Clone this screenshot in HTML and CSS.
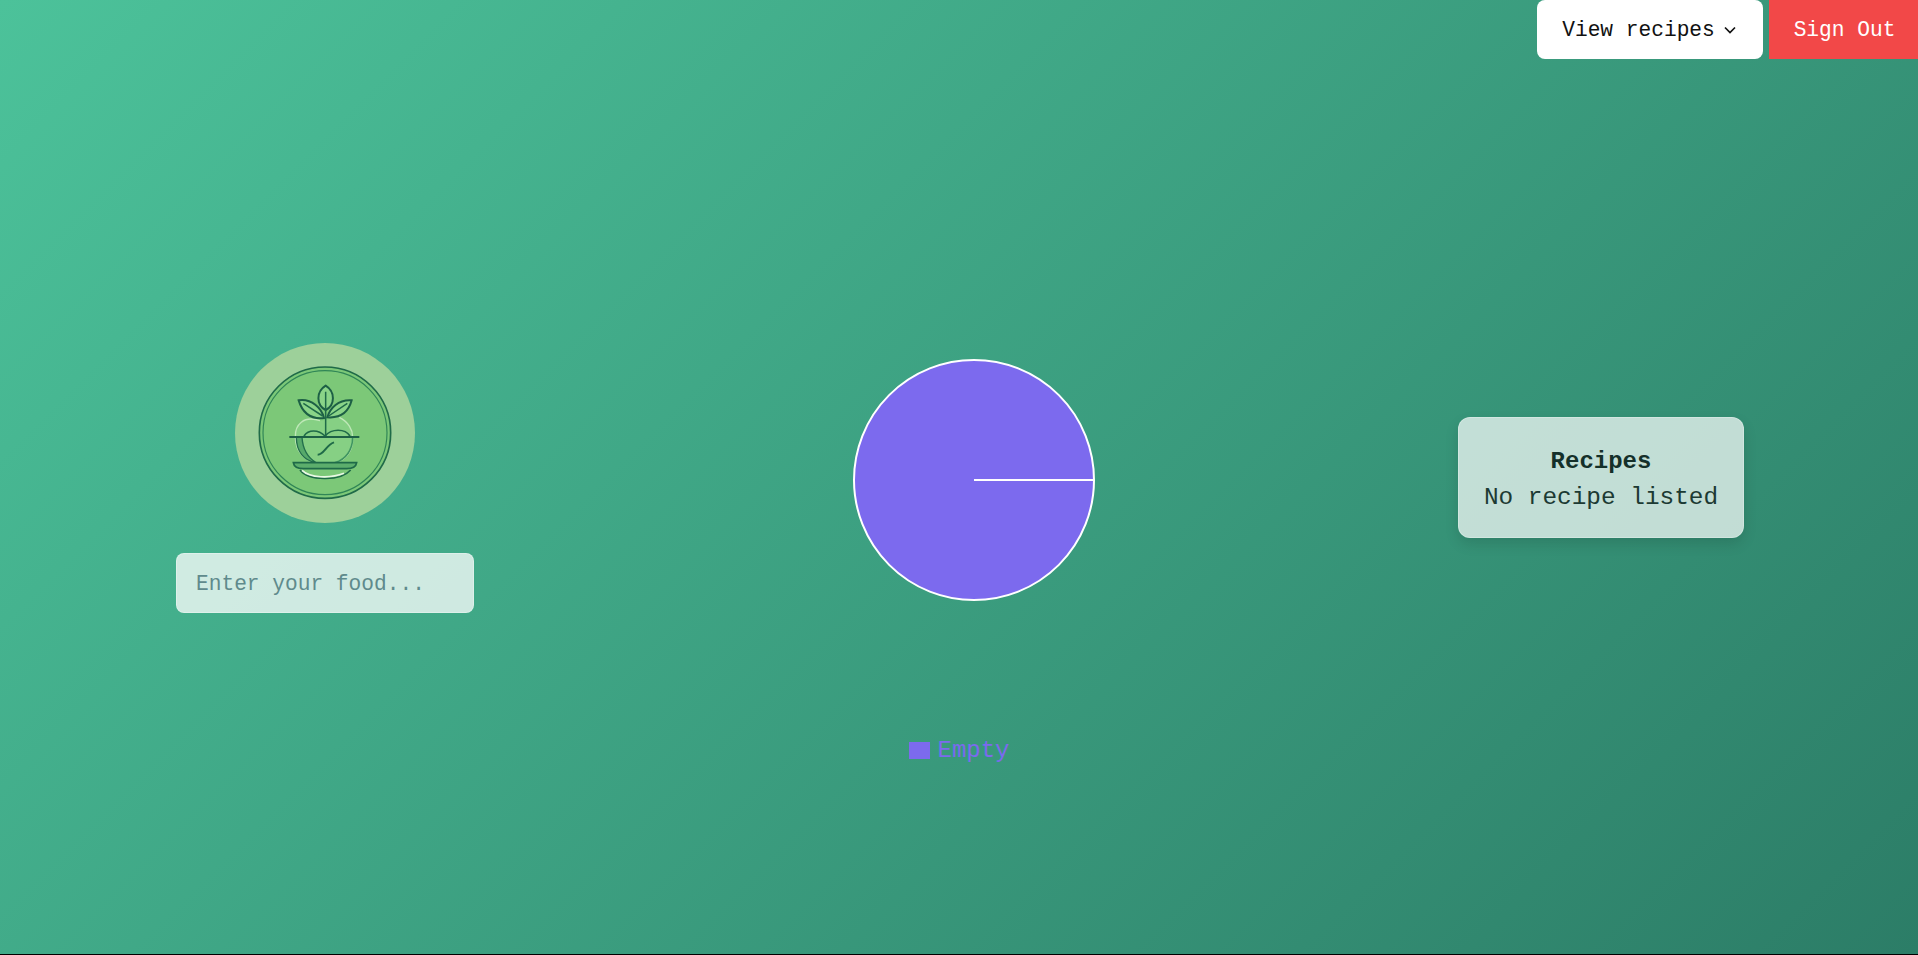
FILE: index.html
```html
<!DOCTYPE html>
<html lang="en">
<head>
    <meta charset="UTF-8">
    <meta name="viewport" content="width=device-width, initial-scale=1.0">
    <title>Food tracker</title>
    <link rel="stylesheet" href="styles.css">
</head>
<body>

    <nav class="topNav">
        <button type="button" class="recipesBtn">
            View recipes
            <svg class="chevron" viewBox="0 0 12 8" width="12" height="8"><path d="M1 1.5 6 6.5l5-5" fill="none" stroke="#111" stroke-width="1.7"/></svg>
        </button>
        <button type="button" class="signOutBtn">Sign Out</button>
    </nav>

    <main class="dashboard">
        <section class="foodColumn">
            <svg class="logo" viewBox="45 39 540 540" width="180" height="180" fill="none">
                <circle cx="315" cy="309" r="270" fill="#9dd09a"/>
                <circle cx="315" cy="308" r="197" fill="#7cc878" stroke="#1f6a48" stroke-width="5"/>
                <circle cx="315" cy="308" r="186" stroke="#2f8556" stroke-width="3.5"/>
                <!-- apple -->
                <path d="M300 272C250 255 225 285 226 320C226 365 255 395 290 398H345C380 390 400 360 398 320C398 300 385 275 358 262" fill="#86d084" stroke="#bfe8b8" stroke-width="4"/>
                <path d="M229 322C229 365 252 392 288 398C262 382 248 355 246 322Z" fill="#56a96a" stroke="#236f4c" stroke-width="4"/>
                <path d="M398 322C398 360 378 388 345 398" stroke="#3f9560" stroke-width="5"/>
                <path d="M252 318C265 298 295 298 315 318C335 295 375 295 390 318" stroke="#1f6a48" stroke-width="5"/>
                <path d="M208 321H418" stroke="#1d5f45" stroke-width="6"/>
                <path d="M293 374C312 374 318 345 342 337" stroke="#1f6a48" stroke-width="6"/>
                <!-- leaves -->
                <path d="M317 167C288 185 288 225 317 240C346 225 346 185 317 167Z" fill="#8ad488" stroke="#1d5f45" stroke-width="6"/>
                <path d="M236 211C275 205 305 235 312 264C275 268 248 250 236 211Z" fill="#8ad488" stroke="#1d5f45" stroke-width="6"/>
                <path d="M395 211C355 208 330 235 322 262C360 265 385 248 395 211Z" fill="#8ad488" stroke="#1d5f45" stroke-width="6"/>
                <path d="M317 185V318M250 220 308 258M382 220 326 258" stroke="#1f6a48" stroke-width="4.5"/>
                <!-- plate -->
                <path d="M220 398H410C408 412 395 416 380 416H250C235 416 222 412 220 398Z" fill="#5cae6c" stroke="#1f6a48" stroke-width="5"/>
                <path d="M240 420C265 452 360 456 392 420" stroke="#1f6a48" stroke-width="5"/>
                <path d="M246 421C270 444 330 446 372 430" stroke="#eaf8e6" stroke-width="5"/>
            </svg>
            <input type="text" class="foodInput" placeholder="Enter your food...">
        </section>

        <section class="chartColumn">
            <svg class="pie" viewBox="0 0 242 242" width="242" height="242">
                <circle cx="121" cy="121" r="120" fill="#7c6aee" stroke="#fff" stroke-width="2"/>
                <path d="M121 121H241" stroke="#fff" stroke-width="2"/>
            </svg>
            <div class="legend">
                <span class="legendSwatch"></span>
                <span>Empty</span>
            </div>
        </section>

        <section class="recipeColumn">
            <div class="recipeCard">
                <h2>Recipes</h2>
                <p>No recipe listed</p>
            </div>
        </section>
    </main>

</body>
</html>
```

FILE: styles.css
```css
* {
    box-sizing: border-box;
}

html {
    background-color: #000;
}

body {
    font-family: 'Liberation Mono', 'DejaVu Sans Mono', monospace;
    background: linear-gradient(135deg, #4cc29a, #2c7d67);
    margin: 0;
    height: calc(100vh - 1px);
    position: relative;
    overflow: hidden;
}

.topNav {
    position: absolute;
    top: 0;
    right: 0;
    display: flex;
    gap: 6px;
}

.topNav button {
    height: 59px;
    border: none;
    font-family: inherit;
    font-size: 21.2px;
    cursor: pointer;
}

.recipesBtn {
    width: 226px;
    display: flex;
    align-items: center;
    justify-content: center;
    gap: 9px;
    padding-right: 8px;
    background-color: #fff;
    color: #111;
    border-radius: 8px;
}

.signOutBtn {
    width: 149px;
    padding-left: 8px;
    background-color: #f24848;
    color: #fff;
}

.dashboard {
    display: grid;
    grid-template-columns: 650px 648px 1fr;
    justify-items: center;
    align-items: center;
    height: 100%;
    padding-right: 14px;
}

.foodColumn {
    display: flex;
    flex-direction: column;
    align-items: center;
    gap: 30px;
    margin-top: 1px;
}

.logo {
    display: block;
}

.foodInput {
    width: 298px;
    height: 60px;
    padding: 3px 19px 0;
    font-family: inherit;
    font-size: 21.2px;
    color: #1a3a32;
    background-color: rgba(255, 255, 255, 0.75);
    border: 1px solid rgba(255, 255, 255, 0.3);
    border-radius: 8px;
}

.foodInput::placeholder {
    color: #5f8a8c;
    opacity: 1;
}

.chartColumn {
    display: flex;
    flex-direction: column;
    align-items: center;
    height: 600px;
    padding-top: 182px;
}

.pie {
    display: block;
}

.legend {
    display: flex;
    align-items: center;
    gap: 7px;
    margin-top: 136px;
    margin-right: 29px;
    color: #7c6aee;
    font-size: 24px;
}

.legendSwatch {
    width: 21px;
    height: 17px;
    background-color: #7c6aee;
}

.recipeCard {
    width: 286px;
    height: 121px;
    margin-top: 1px;
    padding-top: 5px;
    display: flex;
    flex-direction: column;
    align-items: center;
    justify-content: center;
    gap: 8px;
    color: #1c3a33;
    background-color: rgba(255, 255, 255, 0.7);
    border: 1px solid rgba(255, 255, 255, 0.25);
    border-radius: 12px;
    box-shadow: 0 6px 14px rgba(0, 0, 0, 0.12);
}

.recipeCard h2 {
    margin: 0;
    font-size: 24px;
    line-height: 28px;
    color: #14302a;
}

.recipeCard p {
    margin: 0;
    font-size: 24.4px;
    line-height: 28px;
}
```
